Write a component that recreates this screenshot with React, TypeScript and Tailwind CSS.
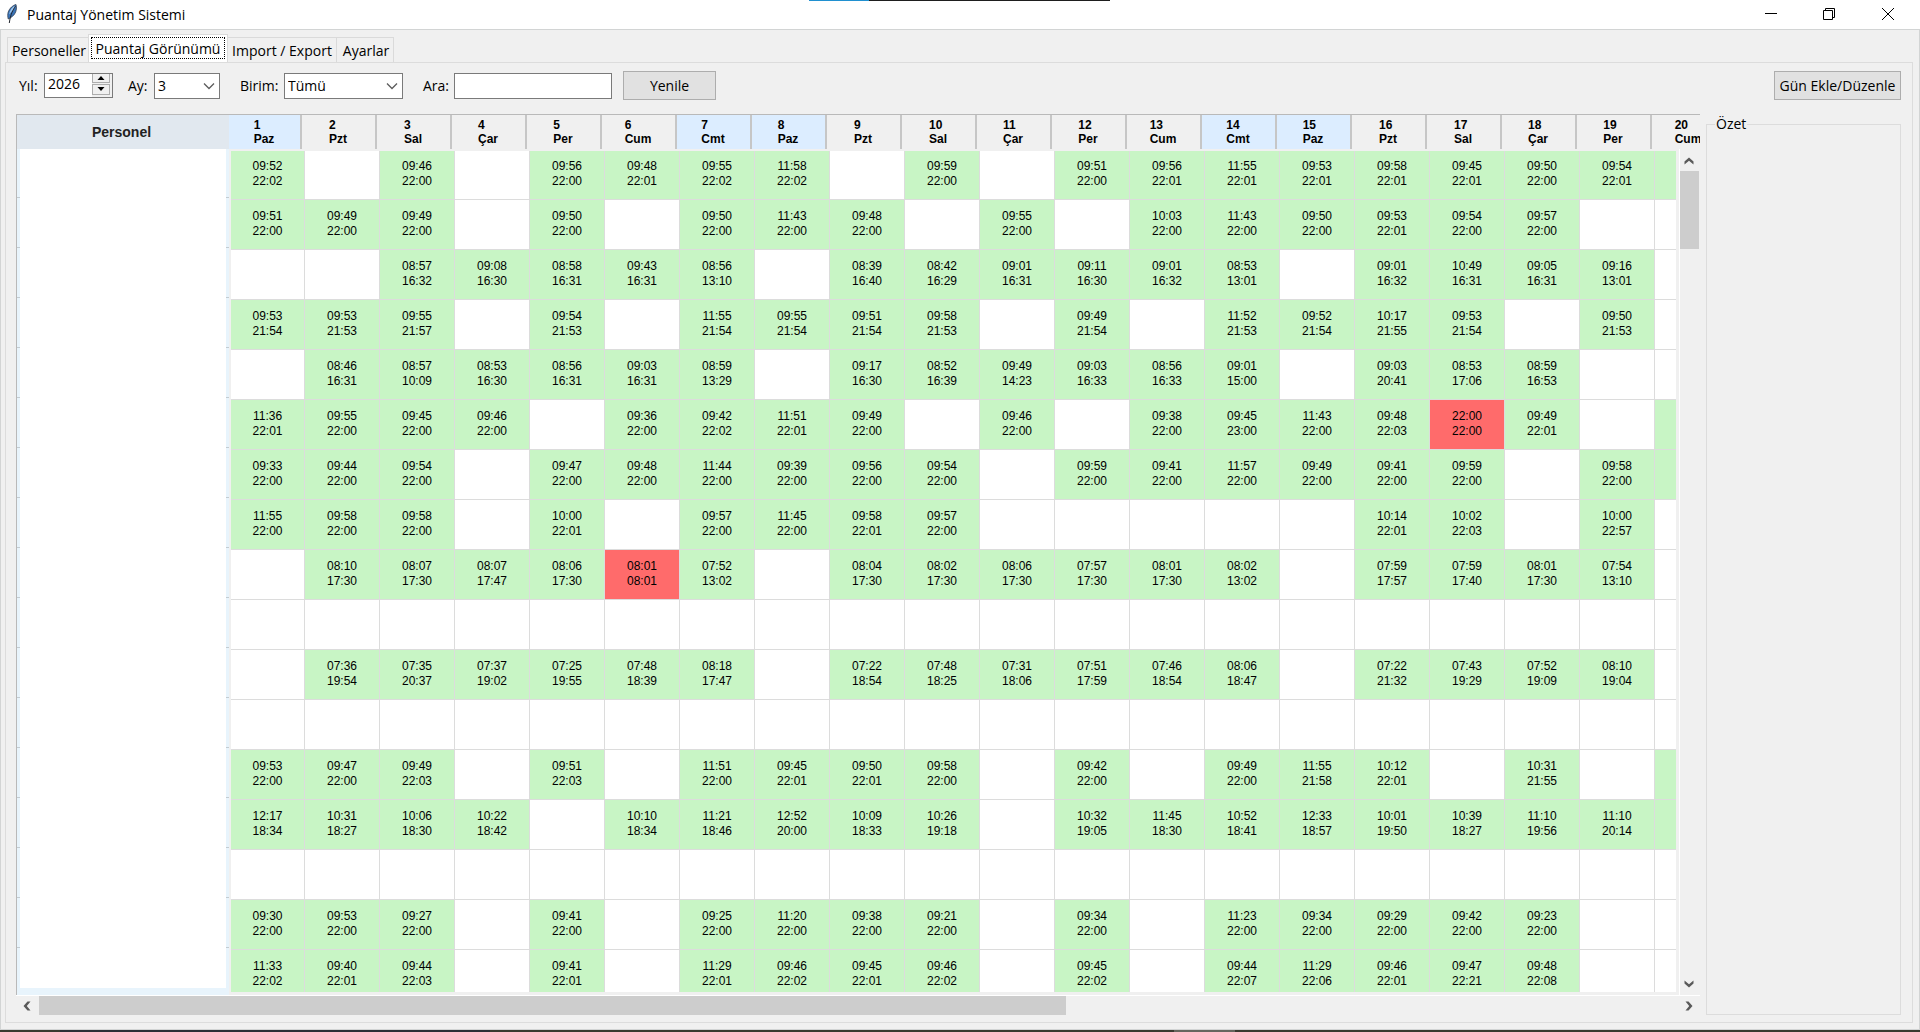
import React from "react";

const dayNames = ["Paz", "Pzt", "Sal", "Çar", "Per", "Cum", "Cmt"];
const days = Array.from({ length: 20 }, (_, i) => ({ n: i + 1, name: dayNames[i % 7] }));

/* One line per person, one entry per day: "in-out", "." for no record, "g" for a recorded day clipped by the view. */
const source = [
  "09:52-22:02 . 09:46-22:00 . 09:56-22:00 09:48-22:01 09:55-22:02 11:58-22:02 . 09:59-22:00 . 09:51-22:00 09:56-22:01 11:55-22:01 09:53-22:01 09:58-22:01 09:45-22:01 09:50-22:00 09:54-22:01 g",
  "09:51-22:00 09:49-22:00 09:49-22:00 . 09:50-22:00 . 09:50-22:00 11:43-22:00 09:48-22:00 . 09:55-22:00 . 10:03-22:00 11:43-22:00 09:50-22:00 09:53-22:01 09:54-22:00 09:57-22:00 . .",
  ". . 08:57-16:32 09:08-16:30 08:58-16:31 09:43-16:31 08:56-13:10 . 08:39-16:40 08:42-16:29 09:01-16:31 09:11-16:30 09:01-16:32 08:53-13:01 . 09:01-16:32 10:49-16:31 09:05-16:31 09:16-13:01 .",
  "09:53-21:54 09:53-21:53 09:55-21:57 . 09:54-21:53 . 11:55-21:54 09:55-21:54 09:51-21:54 09:58-21:53 . 09:49-21:54 . 11:52-21:53 09:52-21:54 10:17-21:55 09:53-21:54 . 09:50-21:53 .",
  ". 08:46-16:31 08:57-10:09 08:53-16:30 08:56-16:31 09:03-16:31 08:59-13:29 . 09:17-16:30 08:52-16:39 09:49-14:23 09:03-16:33 08:56-16:33 09:01-15:00 . 09:03-20:41 08:53-17:06 08:59-16:53 . .",
  "11:36-22:01 09:55-22:00 09:45-22:00 09:46-22:00 . 09:36-22:00 09:42-22:02 11:51-22:01 09:49-22:00 . 09:46-22:00 . 09:38-22:00 09:45-23:00 11:43-22:00 09:48-22:03 22:00-22:00 09:49-22:01 . g",
  "09:33-22:00 09:44-22:00 09:54-22:00 . 09:47-22:00 09:48-22:00 11:44-22:00 09:39-22:00 09:56-22:00 09:54-22:00 . 09:59-22:00 09:41-22:00 11:57-22:00 09:49-22:00 09:41-22:00 09:59-22:00 . 09:58-22:00 g",
  "11:55-22:00 09:58-22:00 09:58-22:00 . 10:00-22:01 . 09:57-22:00 11:45-22:00 09:58-22:01 09:57-22:00 . . . . . 10:14-22:01 10:02-22:03 . 10:00-22:57 .",
  ". 08:10-17:30 08:07-17:30 08:07-17:47 08:06-17:30 08:01-08:01 07:52-13:02 . 08:04-17:30 08:02-17:30 08:06-17:30 07:57-17:30 08:01-17:30 08:02-13:02 . 07:59-17:57 07:59-17:40 08:01-17:30 07:54-13:10 .",
  ". . . . . . . . . . . . . . . . . . . .",
  ". 07:36-19:54 07:35-20:37 07:37-19:02 07:25-19:55 07:48-18:39 08:18-17:47 . 07:22-18:54 07:48-18:25 07:31-18:06 07:51-17:59 07:46-18:54 08:06-18:47 . 07:22-21:32 07:43-19:29 07:52-19:09 08:10-19:04 .",
  ". . . . . . . . . . . . . . . . . . . .",
  "09:53-22:00 09:47-22:00 09:49-22:03 . 09:51-22:03 . 11:51-22:00 09:45-22:01 09:50-22:01 09:58-22:00 . 09:42-22:00 . 09:49-22:00 11:55-21:58 10:12-22:01 . 10:31-21:55 . g",
  "12:17-18:34 10:31-18:27 10:06-18:30 10:22-18:42 . 10:10-18:34 11:21-18:46 12:52-20:00 10:09-18:33 10:26-19:18 . 10:32-19:05 11:45-18:30 10:52-18:41 12:33-18:57 10:01-19:50 10:39-18:27 11:10-19:56 11:10-20:14 g",
  ". . . . . . . . . . . . . . . . . . . .",
  "09:30-22:00 09:53-22:00 09:27-22:00 . 09:41-22:00 . 09:25-22:00 11:20-22:00 09:38-22:00 09:21-22:00 . 09:34-22:00 . 11:23-22:00 09:34-22:00 09:29-22:00 09:42-22:00 09:23-22:00 . .",
  "11:33-22:02 09:40-22:01 09:44-22:03 . 09:41-22:01 . 11:29-22:01 09:46-22:02 09:45-22:01 09:46-22:02 . 09:45-22:02 . 09:44-22:07 11:29-22:06 09:46-22:01 09:47-22:21 09:48-22:08 . .",
];
const rows = source.map((line) => line.split(" "));

function Feather() {
  return (
    <svg viewBox="0 0 14 20" className="h-5 w-3.5" aria-hidden="true">
      <path d="M11 0.500C8 1.200 4.600 4 3.200 8c-.7 2.200-.6 4.800 0 7l1.600-.8C8.800 12 10.900 9 11.400 5.200c.2-1.800 0-3.400-.4-4.700z" fill="#3a74b8" stroke="#2a3444" strokeWidth="0.700" />
      <path d="M10.300 1.500C7.500 2.600 5 5.600 4 10.500l4.500-5z" fill="#9cc6ee" />
      <path d="M10.500 2C8 6 5.500 10 4.300 19" fill="none" stroke="#23272f" strokeWidth="1" />
    </svg>
  );
}

function Chevron({ className }: { className: string }) {
  return (
    <svg viewBox="0 0 12 8" className={className} aria-hidden="true">
      <path d="M1 1.500 6 6.500 11 1.500" fill="none" stroke="#5c5c5c" strokeWidth="1.300" />
    </svg>
  );
}

function ScrollArrow({ className }: { className: string }) {
  return (
    <svg viewBox="0 0 10 8" className={className} aria-hidden="true">
      <path d="M0.500 7.500V4.500L5 0.500l4.500 4v3L5 3.800z" fill="#5a5a5a" />
    </svg>
  );
}

function Select({ id, value, className }: { id: string; value: string; className: string }) {
  return (
    <div className={"relative " + className}>
      <select id={id} defaultValue={value} className="h-[26px] w-full appearance-none border border-[#7a7a7a] bg-white pl-[3px] outline-none">
        <option>{value}</option>
      </select>
      <Chevron className="pointer-events-none absolute top-[9px] right-[5px] h-2 w-3" />
    </div>
  );
}

function Cell({ value, first, top }: { value: string; first: boolean; top: boolean }) {
  const [start, end] = value.split("-");
  const tone = value === "." ? "bg-white" : start === end ? "bg-[#ff6b6b]" : "bg-[#c8f5c5]";
  return (
    <td className={(first ? "" : "border-l border-[#dcdcdc] ") + "border-b border-b-[#dcdcdc] p-0 text-center align-top " + tone}>
      {end && (
        <div className={top ? "pt-2" : "pt-[9px]"}>
          <div>{start}</div>
          <div>{end}</div>
        </div>
      )}
    </td>
  );
}

function Columns({ first }: { first: string }) {
  return (
    <colgroup>
      {days.map((d, i) => (
        <col key={d.n} className={i === 0 ? first : "w-[75px]"} />
      ))}
    </colgroup>
  );
}

export default function App() {
  return (
    <div className="flex h-screen flex-col overflow-hidden bg-[#f0f0f0] font-['Open_Sans',sans-serif] text-[14px] text-black">
      <div className="flex h-px shrink-0 bg-white">
        <div className="ml-[809px] w-[60px] bg-[#2090d0]" />
        <div className="w-[241px] bg-[#1e1e1e]" />
      </div>
      <header className="flex h-7 shrink-0 items-center bg-white pr-[2px] pb-[2px] pl-[5px]">
        <Feather />
        <h1 className="ml-2 flex-1">Puantaj Yönetim Sistemi</h1>
        <button aria-label="Simge durumuna küçült" className="flex h-[26px] w-[58px] items-center justify-center">
          <svg viewBox="0 0 12 12" className="size-3"><path d="M0 5.500H12" stroke="#000" /></svg>
        </button>
        <button aria-label="Önceki boyut" className="flex h-[26px] w-[58px] items-center justify-center">
          <svg viewBox="0 0 12 12" className="size-3"><path d="M0.500 2.500H9.500V11.500H0.500zM2.500 2.500V0.500H11.500V9.500H9.500" fill="none" stroke="#000" /></svg>
        </button>
        <button aria-label="Kapat" className="flex h-[26px] w-[60px] items-center justify-center">
          <svg viewBox="0 0 12 12" className="size-3"><path d="M0 0 12 12M12 0 0 12" stroke="#000" /></svg>
        </button>
      </header>

      <main className="flex min-h-0 flex-1 flex-col border border-[#d2d4d4] px-1 pt-1 pb-[6px]">
        <div role="tablist" className="ml-[2px] flex h-7 shrink-0 items-end">
          <button role="tab" className="h-[25px] w-[81px] border border-r-0 border-b-0 border-[#dadada] pl-[2px] text-center">Personeller</button>
          <button role="tab" aria-selected="true" className="z-10 h-7 w-[140px] border border-b-0 border-[#dadada] bg-white p-[2px] pb-[3px]">
            <span className="flex h-[22px] w-full items-center justify-center border border-dotted border-black">Puantaj Görünümü</span>
          </button>
          <button role="tab" className="h-[25px] w-[108px] border border-r-0 border-b-0 border-l-0 border-[#dadada]">Import / Export</button>
          <button role="tab" className="h-[25px] w-[58px] border border-b-0 border-[#dadada] pl-[2px]">Ayarlar</button>
        </div>

        <section className="mr-[2px] flex min-h-0 flex-1 flex-col border border-[#dcdcdc] pt-2 pr-[11px] pb-[7px] pl-[10px]">
          <form className="flex h-[29px] shrink-0 items-center" onSubmit={(e) => e.preventDefault()}>
            <label htmlFor="yil" className="w-7 pl-[3px]">Yıl:</label>
            <div className="mb-px flex h-[25px] w-[69px] border border-[#7a7a7a] bg-white">
              <input id="yil" defaultValue="2026" className="min-w-0 flex-1 pb-[3px] pl-[3px] outline-none" />
              <div className="flex w-5 flex-col gap-px bg-[#f0f0f0] pr-[2px] pb-[2px]">
                <button aria-label="Artır" className="flex flex-1 items-center justify-center border border-t-0 border-[#adadad]">
                  <svg viewBox="0 0 8 4" className="h-1 w-2"><path d="M0.500 4 4 0 7.500 4z" /></svg>
                </button>
                <button aria-label="Azalt" className="flex flex-1 items-center justify-center border border-[#adadad]">
                  <svg viewBox="0 0 8 4" className="h-1 w-2"><path d="M0.500 0 4 4 7.500 0z" /></svg>
                </button>
              </div>
            </div>
            <label htmlFor="ay" className="ml-[15px] w-[26px]">Ay:</label>
            <Select id="ay" value="3" className="w-[66px]" />
            <label htmlFor="birim" className="ml-5 w-11">Birim:</label>
            <Select id="birim" value="Tümü" className="w-[119px]" />
            <label htmlFor="ara" className="ml-5 w-[31px]">Ara:</label>
            <input id="ara" className="h-[26px] w-[158px] border border-[#7a7a7a] bg-white px-1 outline-none" />
            <button className="ml-[11px] h-[29px] w-[93px] border border-[#adadad] bg-[#e1e1e1]">Yenile</button>
            <button className="ml-auto h-[29px] w-[127px] border border-[#adadad] bg-[#e1e1e1]">Gün Ekle/Düzenle</button>
          </form>

          <div className="mt-[14px] flex min-h-0 flex-1">
            <div className="flex min-w-0 flex-1 flex-col">
              <div className="flex min-h-0 flex-1 border-t border-l border-[#b9b9b9] font-['Liberation_Sans',Arial,sans-serif] text-[12px]">
                <div className="flex w-[212px] shrink-0 flex-col overflow-hidden bg-[#e8f4fc]">
                  <div className="flex h-[34px] shrink-0 items-center justify-center bg-[#e1e8ef] pr-[3px] text-[14px] font-bold text-[#222222]">Personel</div>
                  <div className="relative min-h-0 flex-1 overflow-hidden">
                    {rows.map((_, i) => (
                      <div key={i} className={(i === 0 ? "h-[49px]" : "h-[50px]") + " border-b border-[#c3ccd2]"} />
                    ))}
                    <div className="absolute top-0 right-[3px] bottom-[7px] left-[3px] bg-white" />
                  </div>
                </div>

                <div className="flex min-w-0 flex-1 flex-col">
                  <div className="h-[34px] shrink-0 overflow-hidden">
                    <table className="w-[1498px] table-fixed border-separate border-spacing-0 text-[12px] font-bold leading-[14px]">
                      <Columns first="w-[73px]" />
                      <thead>
                        <tr className="h-[34px]">
                          {days.map((d) => (
                            <th key={d.n} scope="col" className={"border-r-2 border-[#c6c6c6] p-0 pr-px text-center align-middle " + (d.name === "Paz" || d.name === "Cmt" ? "bg-[#dcedff]" : "")}>
                              <span className="inline-block text-left">{d.n}<br />{d.name}</span>
                            </th>
                          ))}
                        </tr>
                      </thead>
                    </table>
                  </div>
                  <div className="flex min-h-0 flex-1">
                    <div className="mt-[2px] mb-[3px] ml-[2px] min-w-0 flex-1 overflow-hidden">
                      <table className="w-[1498px] table-fixed border-separate border-spacing-0 leading-[15px]">
                        <Columns first="w-[73px]" />
                        <tbody>
                          {rows.map((r, i) => (
                            <tr key={i} className={i === 0 ? "h-[49px]" : "h-[50px]"}>
                              {r.map((v, j) => (
                                <Cell key={j} value={v} first={j === 0} top={i === 0} />
                              ))}
                            </tr>
                          ))}
                        </tbody>
                      </table>
                    </div>
                    <div className="ml-[3px] flex w-[21px] flex-col border-l border-white">
                      <ScrollArrow className="mt-2 mb-[6px] ml-1 h-2 w-2.5 shrink-0" />
                      <div className="h-[78px] w-[19px] bg-[#cdcdcd]" />
                      <ScrollArrow className="mt-auto mb-[7px] ml-1 h-2 w-2.5 shrink-0 rotate-180" />
                    </div>
                  </div>
                </div>
              </div>
              <div className="flex h-5 items-center border-t border-white">
                <ScrollArrow className="mr-[7px] ml-[6px] h-2 w-2.5 shrink-0 -rotate-90" />
                <div className="h-[19px] w-[61%] bg-[#cdcdcd]" />
                <ScrollArrow className="mr-[6px] ml-auto h-2 w-2.5 shrink-0 rotate-90" />
              </div>
            </div>
            <fieldset className="ml-[6px] w-[195px] border border-[#dcdcdc] pl-[8px]">
              <legend className="px-px leading-5">Özet</legend>
            </fieldset>
          </div>
        </section>
      </main>
      <footer className="flex h-[2px] shrink-0 bg-[#3a3a30]">
        <div className="ml-[60px] w-[430px] bg-[#2d2f36]" />
        <div className="ml-[684px] w-[61px] bg-[#66665e]" />
      </footer>
    </div>
  );
}
